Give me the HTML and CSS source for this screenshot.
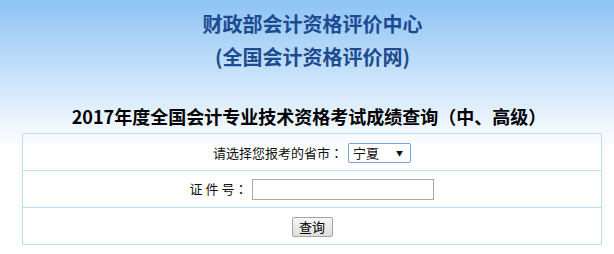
FILE: index.html
```html
<!DOCTYPE html>
<html lang="zh-CN">
<head>
<meta charset="utf-8">
<title>2017年度全国会计专业技术资格考试成绩查询</title>
<link rel="stylesheet" href="styles.css">
</head>
<body>
<div class="page">
  <div class="org">
    <div class="org-line">财政部会计资格评价中心</div>
    <div class="org-line">(全国会计资格评价网)</div>
  </div>
  <h1 class="title">2017年度全国会计专业技术资格考试成绩查询（中、高级）</h1>
  <table class="form">
    <tr>
      <td>
        <span class="label">请选择您报考的省市<span class="colon" lang="zh-TW">：</span></span><span class="select"><span class="select-text">宁夏</span><span class="arrow">▼</span></span>
      </td>
    </tr>
    <tr>
      <td>
        <span class="label">证 件 号<span class="colon" lang="zh-TW">：</span></span><span class="input"></span>
      </td>
    </tr>
    <tr>
      <td>
        <span class="button">查询</span>
      </td>
    </tr>
  </table>
</div>
</body>
</html>
```
FILE: styles.css
```css
html, body {
  margin: 0;
  padding: 0;
  height: 100%;
}
body {
  background: linear-gradient(to bottom, #8ec3f4 0px, #c4e0fa 70px, #eef6fe 125px, #ffffff 150px) no-repeat;
  background-color: #ffffff;
  font-family: "Noto Sans CJK SC", "Noto Sans", sans-serif;
}
.page {
  padding: 7px 12px 0 22px;
}
.org {
  text-align: center;
  color: #1d4b90;
  font-size: 20px;
  font-weight: bold;
  line-height: 33px;
  padding-left: 1px;
}
.title {
  margin: 31px 0 5px;
  text-align: center;
  font-size: 18px;
  font-weight: bold;
  line-height: 24px;
  color: #000;
  padding-right: 6px;
}
.form {
  width: 580px;
  border-collapse: collapse;
}
.form td {
  border: 1px solid #b9e0f1;
  height: 36px;
  padding: 0;
  text-align: center;
  vertical-align: middle;
  font-size: 13px;
  color: #111;
}
.label {
  display: inline-block;
  vertical-align: middle;
  line-height: 20px;
  margin-right: 5px;
}
.colon {
  font-family: "Noto Sans CJK TC", "Noto Sans CJK SC", sans-serif;
}
.select {
  display: inline-flex;
  align-items: center;
  justify-content: space-between;
  vertical-align: middle;
  box-sizing: border-box;
  width: 63px;
  height: 20px;
  border: 1px solid #7b9fe3;
  border-radius: 2px;
  background: #fff;
  padding: 0 7px 0 4px;
  font-size: 13px;
  line-height: 18px;
  text-align: left;
}
.arrow {
  font-size: 7px;
  line-height: 18px;
}
.input {
  display: inline-block;
  vertical-align: middle;
  box-sizing: border-box;
  width: 182px;
  height: 21px;
  border: 1px solid #a9a9a9;
  background: #fff;
}
.button {
  display: inline-block;
  vertical-align: middle;
  box-sizing: border-box;
  width: 41px;
  height: 20px;
  margin-top: 2px;
  border: 1px solid #a3a3a3;
  border-radius: 2px;
  background: linear-gradient(to bottom, #f6f6f6, #dedede);
  font-size: 13px;
  line-height: 18px;
  color: #000;
}
```
